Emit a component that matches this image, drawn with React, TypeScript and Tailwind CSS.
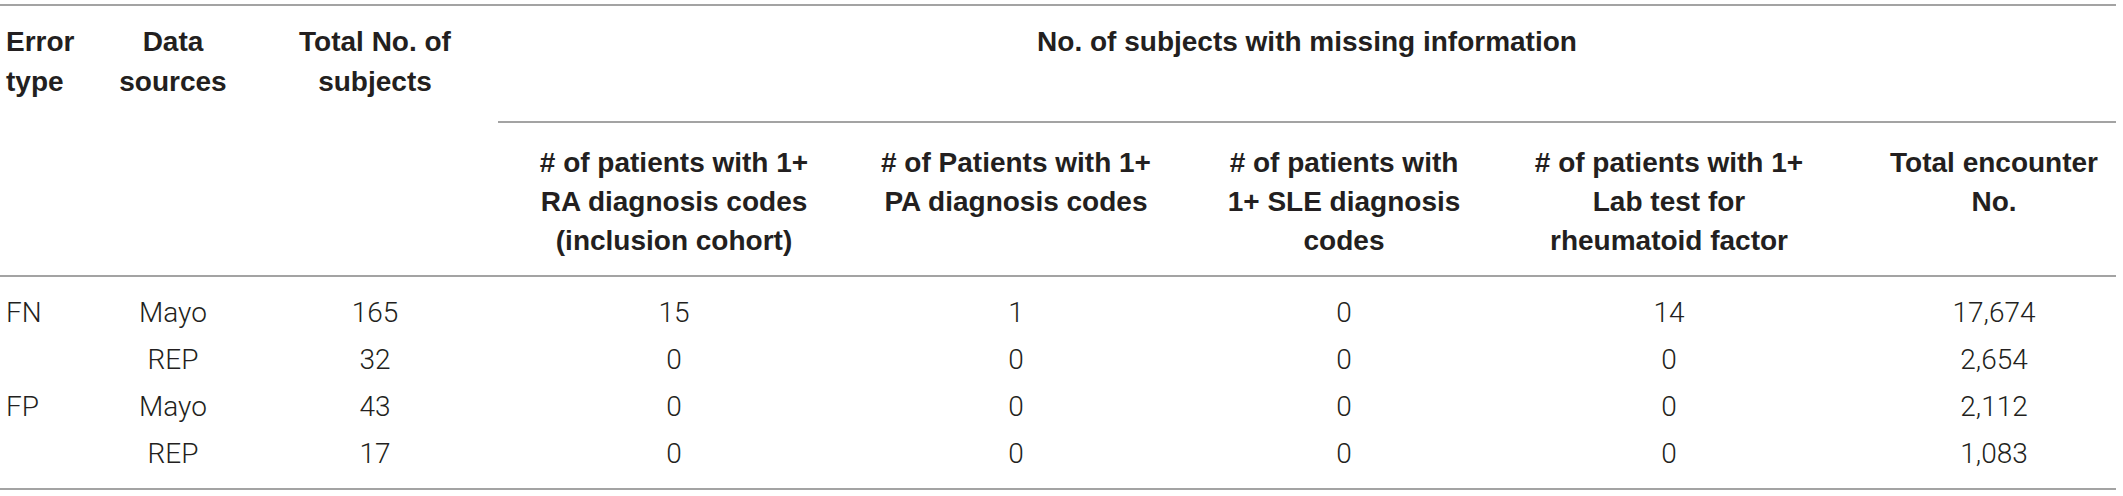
const headCell = "align-top text-center font-bold text-[#231f20] px-0";

const rows = [
  { type: "FN", source: "Mayo", total: "165", ra: "15", pa: "1", sle: "0", lab: "14", enc: "17,674" },
  { type: "", source: "REP", total: "32", ra: "0", pa: "0", sle: "0", lab: "0", enc: "2,654" },
  { type: "FP", source: "Mayo", total: "43", ra: "0", pa: "0", sle: "0", lab: "0", enc: "2,112" },
  { type: "", source: "REP", total: "17", ra: "0", pa: "0", sle: "0", lab: "0", enc: "1,083" },
];

export default function App() {
  return (
    <div className="w-[2123px] h-[496px] bg-white pt-[4px] font-['Liberation_Sans',Arial,sans-serif] text-[28px]">
      <div className="w-[2116px] border-t-2 border-b-2 border-[#a3a3a3]">
        <table className="table-fixed w-[2116px] border-separate border-spacing-0">
          <colgroup>
            <col className="w-[94px]" />
            <col className="w-[158px]" />
            <col className="w-[246px]" />
            <col className="w-[352px]" />
            <col className="w-[332px]" />
            <col className="w-[324px]" />
            <col className="w-[326px]" />
            <col className="w-[284px]" />
          </colgroup>
          <thead>
            <tr>
              <th rowSpan={2} className="align-top text-left font-bold text-[#231f20] pl-[6px] pt-[16px] leading-[40px] border-b-2 border-[#a3a3a3]">
                Error
                <br />
                type
              </th>
              <th rowSpan={2} className={`${headCell} pt-[16px] leading-[40px] border-b-2 border-[#a3a3a3]`}>
                Data
                <br />
                sources
              </th>
              <th rowSpan={2} className={`${headCell} pt-[16px] leading-[40px] border-b-2 border-[#a3a3a3]`}>
                Total No. of
                <br />
                subjects
              </th>
              <th colSpan={5} className={`${headCell} pt-[16px] pb-[59px] leading-[40px] border-b-2 border-[#a3a3a3]`}>
                No. of subjects with missing information
              </th>
            </tr>
            <tr>
              <th className={`${headCell} pt-[20px] pb-[15px] leading-[39px] whitespace-nowrap border-b-2 border-[#a3a3a3]`}>
                # of patients with 1+
                <br />
                RA diagnosis codes
                <br />
                (inclusion cohort)
              </th>
              <th className={`${headCell} pt-[20px] pb-[15px] leading-[39px] whitespace-nowrap border-b-2 border-[#a3a3a3]`}>
                # of Patients with 1+
                <br />
                PA diagnosis codes
              </th>
              <th className={`${headCell} pt-[20px] pb-[15px] leading-[39px] whitespace-nowrap border-b-2 border-[#a3a3a3]`}>
                # of patients with
                <br />
                1+ SLE diagnosis
                <br />
                codes
              </th>
              <th className={`${headCell} pt-[20px] pb-[15px] leading-[39px] whitespace-nowrap border-b-2 border-[#a3a3a3]`}>
                # of patients with 1+
                <br />
                Lab test for
                <br />
                rheumatoid factor
              </th>
              <th className={`${headCell} pl-[40px] pt-[20px] pb-[15px] leading-[39px] whitespace-nowrap border-b-2 border-[#a3a3a3]`}>
                Total encounter
                <br />
                No.
              </th>
            </tr>
          </thead>
          <tbody className="font-['Roboto','Liberation_Sans',Arial,sans-serif] text-[#231f20] font-light leading-[47px]">
            {rows.map((r, i) => {
              const pad = i === 0 ? "pt-[12px]" : i === rows.length - 1 ? "pb-[11px]" : "";
              return (
                <tr key={i}>
                  <td className={`text-left pl-[6px] ${pad}`}>{r.type}</td>
                  <td className={`text-center ${pad}`}>{r.source}</td>
                  <td className={`text-center ${pad}`}>{r.total}</td>
                  <td className={`text-center ${pad}`}>{r.ra}</td>
                  <td className={`text-center ${pad}`}>{r.pa}</td>
                  <td className={`text-center ${pad}`}>{r.sle}</td>
                  <td className={`text-center ${pad}`}>{r.lab}</td>
                  <td className={`text-center pl-[40px] ${pad}`}>{r.enc}</td>
                </tr>
              );
            })}
          </tbody>
        </table>
      </div>
    </div>
  );
}
